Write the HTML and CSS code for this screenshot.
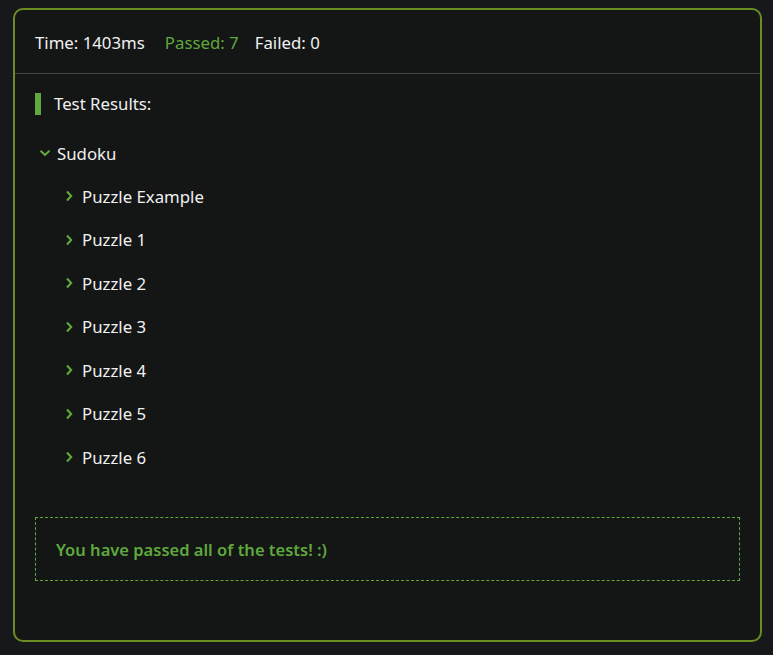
FILE: index.html
```html
<!DOCTYPE html>
<html>
<head>
<meta charset="utf-8">
<link rel="stylesheet" href="styles.css">
</head>
<body>
<div class="card">
  <div class="stats">
    <span class="stat time">Time: 1403ms</span>
    <span class="stat passed">Passed: 7</span>
    <span class="stat">Failed: 0</span>
  </div>
  <div class="body">
    <h2 class="heading">Test Results:</h2>
    <div class="suite">
      <div class="row suite-row">
        <svg class="chev" width="12" height="12" viewBox="0 0 12 12"><path d="M1.5 3.8 L6 8 L10.5 3.8" fill="none" stroke="#5fae3a" stroke-width="2"/></svg>
        <span>Sudoku</span>
      </div>
      <div class="cases">
        <div class="row case"><svg class="chev" width="12" height="12" viewBox="0 0 12 12"><path d="M3 1.5 L7.2 6 L3 10.5" fill="none" stroke="#5fae3a" stroke-width="2"/></svg><span>Puzzle Example</span></div>
        <div class="row case"><svg class="chev" width="12" height="12" viewBox="0 0 12 12"><path d="M3 1.5 L7.2 6 L3 10.5" fill="none" stroke="#5fae3a" stroke-width="2"/></svg><span>Puzzle 1</span></div>
        <div class="row case"><svg class="chev" width="12" height="12" viewBox="0 0 12 12"><path d="M3 1.5 L7.2 6 L3 10.5" fill="none" stroke="#5fae3a" stroke-width="2"/></svg><span>Puzzle 2</span></div>
        <div class="row case"><svg class="chev" width="12" height="12" viewBox="0 0 12 12"><path d="M3 1.5 L7.2 6 L3 10.5" fill="none" stroke="#5fae3a" stroke-width="2"/></svg><span>Puzzle 3</span></div>
        <div class="row case"><svg class="chev" width="12" height="12" viewBox="0 0 12 12"><path d="M3 1.5 L7.2 6 L3 10.5" fill="none" stroke="#5fae3a" stroke-width="2"/></svg><span>Puzzle 4</span></div>
        <div class="row case"><svg class="chev" width="12" height="12" viewBox="0 0 12 12"><path d="M3 1.5 L7.2 6 L3 10.5" fill="none" stroke="#5fae3a" stroke-width="2"/></svg><span>Puzzle 5</span></div>
        <div class="row case"><svg class="chev" width="12" height="12" viewBox="0 0 12 12"><path d="M3 1.5 L7.2 6 L3 10.5" fill="none" stroke="#5fae3a" stroke-width="2"/></svg><span>Puzzle 6</span></div>
      </div>
    </div>
    <div class="success">You have passed all of the tests! :)</div>
  </div>
</div>
</body>
</html>
```
FILE: styles.css
```css
html, body {
  margin: 0;
  padding: 0;
  background: #17181c;
}
body {
  padding: 8px 11px 14px 13px;
  font-family: "Noto Sans", "Open Sans", sans-serif;
  font-size: 16.8px;
  color: #f0f0f0;
}
.card {
  box-sizing: border-box;
  height: 634px;
  border: 2px solid #6b8e23;
  border-radius: 10px;
  background: #141515;
}
.stats {
  display: flex;
  height: 64px;
  align-items: center;
  padding: 2px 0 0 20px;
  border-bottom: 1px solid #444;
  box-sizing: border-box;
}
.stats .stat { line-height: 20px; }
.stats .time { margin-right: 20px; }
.stats .passed { color: #5fa83c; margin-right: 16px; }
.body {
  padding: 19px 20px 0 20px;
}
.heading {
  margin: 0;
  font-size: 16.8px;
  font-weight: 400;
  border-left: 6px solid #5fa83c;
  padding-left: 13px;
  height: 22px;
  line-height: 22px;
}
.suite {
  margin-top: 27px;
}
.row {
  display: flex;
  align-items: center;
  height: 22px;
}
.suite-row {
  padding-left: 4px;
  gap: 6px;
}
.cases {
  padding-left: 29px;
  margin-top: 21px;
  display: flex;
  flex-direction: column;
  gap: 21.5px;
}
.case { gap: 6px; }
.chev { flex: none; }
.success {
  margin-top: 49px;
  height: 64px;
  box-sizing: border-box;
  border: 1px dashed #5fa83c;
  display: flex;
  align-items: center;
  padding-left: 20px;
  color: #5fa83c;
  font-size: 16.5px;
  font-weight: 600;
}
```
